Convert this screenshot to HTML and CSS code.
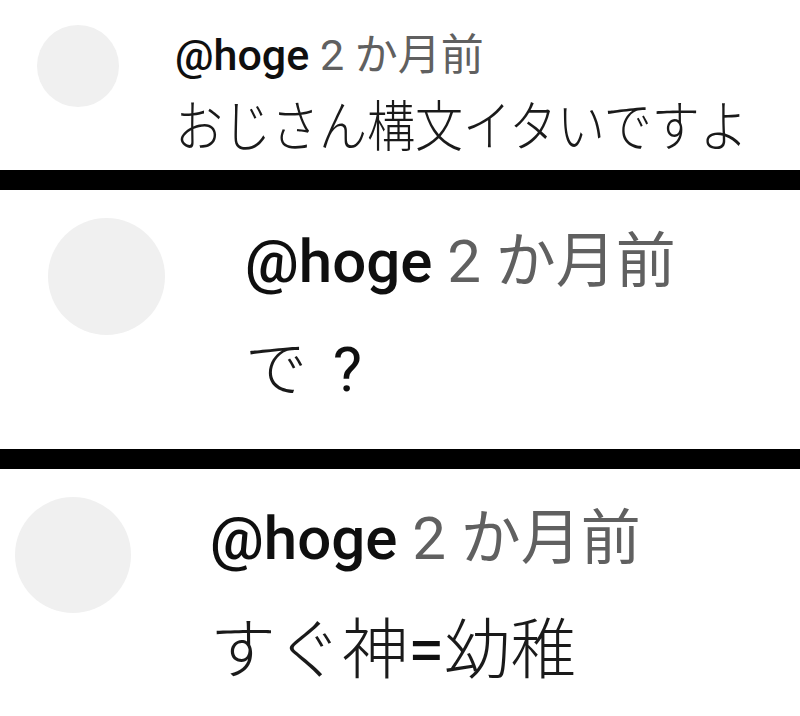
FILE: index.html
```html
<!DOCTYPE html>
<html lang="ja">
<head>
    <meta charset="UTF-8">
    <meta name="viewport" content="width=device-width, initial-scale=1.0">
    <title>コメント</title>
    <link rel="stylesheet" href="styles.css">
</head>
<body>
    <!-- Three cropped comment captures, stacked with black separators -->
    <div class="strip">
        <div class="comment comment-small">
            <div class="avatar"></div>
            <div class="comment-body">
                <div class="comment-head">
                    <span class="author">@hoge</span>
                    <span class="date">2 か月前</span>
                </div>
                <div class="comment-text">おじさん構文イタいですよ</div>
            </div>
        </div>

        <div class="comment comment-large">
            <div class="avatar"></div>
            <div class="comment-body">
                <div class="comment-head">
                    <span class="author">@hoge</span>
                    <span class="date">2 か月前</span>
                </div>
                <div class="comment-text">で <span class="latin">?</span></div>
            </div>
        </div>

        <div class="comment comment-last">
            <div class="avatar"></div>
            <div class="comment-body">
                <div class="comment-head">
                    <span class="author">@hoge</span>
                    <span class="date">2 か月前</span>
                </div>
                <div class="comment-text">すぐ神<span class="latin">=</span>幼稚</div>
            </div>
        </div>
    </div>
</body>
</html>
```

FILE: styles.css
```css
/* Page and separators */
body {
    margin: 0;
    background-color: #000000;
    font-family: Roboto, "Noto Sans CJK JP", sans-serif;
    color: #0f0f0f;
}

.strip {
    display: flex;
    flex-direction: column;
    gap: 20px;
    height: 716px;
}

/* One comment row */
.comment {
    display: flex;
    align-items: flex-start;
    background-color: #ffffff;
    box-sizing: border-box;
}

.avatar {
    flex: none;
    border-radius: 50%;
    background-color: #f0f0f0;
}

.comment-head {
    white-space: nowrap;
}

.author {
    font-weight: 500;
    color: #0f0f0f;
}

.date {
    color: #606060;
}

.comment-text {
    font-family: "Noto Sans CJK JP", sans-serif;
    font-weight: 300;
    color: #1a1a1a;
    white-space: nowrap;
}

.comment-text .latin {
    font-family: Roboto, sans-serif;
    font-weight: 400;
    color: #0f0f0f;
}

/* First capture: smaller scale, slightly stretched vertically */
.comment-small {
    height: 170px;
    padding: 25px 0 0 37px;
    gap: 56px;
}

.comment-small .avatar {
    width: 82px;
    height: 82px;
}

.comment-small .comment-head {
    font-size: 43px;
    line-height: 50px;
    margin-top: 5px;
}

.comment-small .comment-text {
    font-size: 48px;
    line-height: 60px;
    margin-top: 8px;
    transform: scaleY(1.14);
    transform-origin: center top;
}

/* Second capture */
.comment-large {
    height: 259px;
    padding: 28px 0 0 48px;
    gap: 80px;
}

.comment-large .avatar {
    width: 117px;
    height: 117px;
}

.comment-large .comment-head {
    font-size: 60px;
    line-height: 72px;
    margin-top: 8px;
}

.comment-large .comment-text {
    font-size: 62px;
    line-height: 80px;
    margin-top: 26px;
}

.comment-large .latin {
    margin-left: 12px;
}

/* Third capture */
.comment-last {
    flex: 1;
    padding: 28px 0 0 15px;
    gap: 79px;
}

.comment-last .avatar {
    width: 116px;
    height: 116px;
}

.comment-last .comment-head {
    font-size: 60px;
    line-height: 72px;
    margin-top: 6px;
}

.comment-last .comment-text {
    font-size: 66px;
    line-height: 80px;
    margin-top: 29px;
}
```
